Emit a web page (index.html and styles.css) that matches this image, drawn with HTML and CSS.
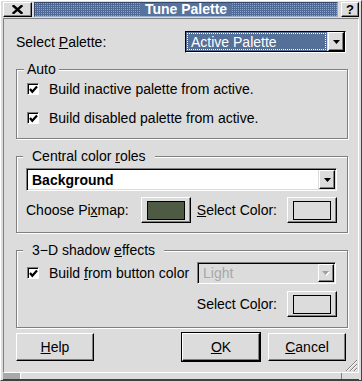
FILE: index.html
```html
<!DOCTYPE html>
<html lang="en">
  <head>
    <meta charset="UTF-8">
    <title>Tune Palette</title>
    <link rel="stylesheet" href="styles.css">
  </head>
  <body>
    <div class="window">
      <div class="titlebar">
        <span class="tb-btn tb-close">
          <svg width="11" height="9" viewBox="0 0 11 9"><path d="M1.5 1 L9.5 8 M9.5 1 L1.5 8" stroke="#000" stroke-width="2.4" stroke-linecap="square"/></svg>
        </span>
        <div class="tb-bar">
          <span class="tb-dots"></span>
          <span class="tb-title">Tune Palette</span>
          <span class="tb-dots"></span>
        </div>
        <span class="tb-btn tb-help">?</span>
      </div>

      <div class="client">
        <div class="palette-row">
          <span>Select <u>P</u>alette:</span>
          <div class="combo combo-active">
            <span class="combo-field"><span class="focus-rect">Active Palette</span></span>
            <span class="combo-arrow"><svg width="7" height="4" viewBox="0 0 7 4"><path d="M0 0 H7 L3.5 4 Z" fill="#000"/></svg></span>
          </div>
        </div>

        <fieldset class="group group-auto">
          <legend class="legend-narrow">Auto</legend>
          <div class="group-body">
            <label class="check-row">
              <span class="check"><svg width="9" height="9" viewBox="0 0 9 9"><path d="M1 4 L3.3 6.8 L8 1.5" fill="none" stroke="#000" stroke-width="2.2"/></svg></span>
              <span>Build inactive palette from active.</span>
            </label>
            <label class="check-row">
              <span class="check"><svg width="9" height="9" viewBox="0 0 9 9"><path d="M1 4 L3.3 6.8 L8 1.5" fill="none" stroke="#000" stroke-width="2.2"/></svg></span>
              <span>Build disabled palette from active.</span>
            </label>
          </div>
        </fieldset>

        <fieldset class="group group-central">
          <legend class="legend-wide">Central color <u>r</u>oles</legend>
          <div class="group-body">
            <div class="combo combo-white">
              <span class="combo-field"><b>Background</b></span>
              <span class="combo-arrow"><svg width="7" height="4" viewBox="0 0 7 4"><path d="M0 0 H7 L3.5 4 Z" fill="#000"/></svg></span>
            </div>
            <div class="color-row">
              <span class="grow">Choose Pi<u>x</u>map:</span>
              <span class="btn color-btn"><span class="swatch swatch-pixmap"></span></span>
              <span class="color-label"><u>S</u>elect Color:</span>
              <span class="btn color-btn"><span class="swatch"></span></span>
            </div>
          </div>
        </fieldset>

        <fieldset class="group group-shadow">
          <legend class="legend-wide">3&minus;D shadow <u>e</u>ffects</legend>
          <div class="group-body">
            <div class="shadow-row">
              <label class="check-row">
                <span class="check"><svg width="9" height="9" viewBox="0 0 9 9"><path d="M1 4 L3.3 6.8 L8 1.5" fill="none" stroke="#000" stroke-width="2.2"/></svg></span>
                <span>Build <u>f</u>rom button color</span>
              </label>
              <div class="combo combo-disabled">
                <span class="combo-field">Light</span>
                <span class="combo-arrow"><svg width="8" height="5" viewBox="0 0 8 5"><path d="M1 1 H8 L4.5 5 Z" fill="#fff"/><path d="M0 0 H7 L3.5 4 Z" fill="#a0a0a0"/></svg></span>
              </div>
            </div>
            <div class="color-row color-row-end">
              <span class="color-label">Select Co<u>l</u>or:</span>
              <span class="btn color-btn"><span class="swatch"></span></span>
            </div>
          </div>
        </fieldset>

        <div class="button-row">
          <span class="btn push"><span><u>H</u>elp</span></span>
          <span class="btn push push-default"><span><u>O</u>K</span></span>
          <span class="btn push"><span><u>C</u>ancel</span></span>
        </div>

        <svg class="grip" width="12" height="12" viewBox="0 0 12 12">
          <path d="M12 1 L1 12 M12 5 L5 12 M12 9 L9 12" stroke="#808080" stroke-width="1"/>
          <path d="M12 2 L2 12 M12 6 L6 12 M12 10 L10 12" stroke="#fff" stroke-width="1"/>
        </svg>
      </div>

      <div class="handle">
        <span class="handle-end"></span>
        <span class="handle-mid"></span>
        <span class="handle-end handle-right"></span>
      </div>
    </div>
  </body>
</html>
```

FILE: styles.css
```css
body {
  margin: 0;
  font-family: 'Liberation Sans', Arial, sans-serif;
  font-size: 14px;
  color: #000;
  background: #dcdcdc;
}

.window {
  width: 362px;
  height: 381px;
  box-sizing: border-box;
  background: #dcdcdc;
  border: 1px solid;
  border-color: #fff #404040 #404040 #fff;
  padding: 0 2px;
  display: flex;
  flex-direction: column;
}

/* title bar */

.titlebar {
  height: 15px;
  margin: 1px 0;
  display: flex;
  gap: 2px;
}

.tb-btn {
  box-sizing: border-box;
  height: 15px;
  border: 1px solid;
  border-color: #fff #000 #000 #fff;
  box-shadow: inset -1px -1px 0 #808080;
  display: flex;
  align-items: center;
  justify-content: center;
}

.tb-close {
  width: 29px;
}

.tb-help {
  width: 18px;
  margin-left: 1px;
  font-weight: bold;
  font-size: 13px;
  line-height: 13px;
}

.tb-bar {
  flex: 1;
  display: flex;
  box-sizing: border-box;
  border: 1px solid;
  border-color: #34496a #9aaccb #9aaccb #34496a;
  background: #56729e;
}

.tb-dots {
  flex: 1;
  background-color: #4f6a97;
  background-image:
    linear-gradient(90deg, transparent 1px, #4f6a97 1px),
    linear-gradient(transparent 1px, #4f6a97 1px),
    linear-gradient(#8aa3cb, #8aa3cb);
  background-size: 2px 2px;
}

.tb-title {
  padding: 0 5px;
  color: #fff;
  font-weight: bold;
  font-size: 14px;
  line-height: 13px;
}

/* client area */

.client {
  flex: 1;
  position: relative;
  border: 1px solid;
  border-color: #808080 #fff #fff #808080;
  padding: 12px 10px 0 12px;
}

.palette-row {
  height: 22px;
  display: flex;
  align-items: center;
  justify-content: space-between;
}

.combo {
  box-sizing: border-box;
  display: flex;
  border: 1px solid;
  border-color: #808080 #fff #fff #808080;
  box-shadow: inset 1px 1px 0 #000;
  padding: 1px;
}

.combo-field {
  flex: 1;
  display: flex;
  align-items: center;
  padding-left: 4px;
}

.combo-arrow {
  box-sizing: border-box;
  width: 16px;
  border: 1px solid;
  border-color: #fff #000 #000 #fff;
  box-shadow: inset -1px -1px 0 #808080;
  background: #dcdcdc;
  display: flex;
  align-items: center;
  justify-content: center;
}

.combo-active {
  width: 161px;
  height: 22px;
  margin-right: 2px;
  border-color: #000 #fff #fff #000;
  box-shadow: inset -1px -1px 0 #000;
  padding: 0 1px 1px 0;
}

.combo-active .combo-field {
  background: #546f98;
  color: #fff;
  padding: 1px;
  margin-right: 1px;
}

.focus-rect {
  flex: 1;
  align-self: stretch;
  display: flex;
  align-items: center;
  padding-left: 3px;
  border: 1px dotted #fff;
}

.combo-white {
  height: 23px;
}

.combo-white .combo-field {
  background: #fff;
  margin-right: 1px;
}

.combo-disabled {
  width: 139px;
  height: 22px;
  margin-left: auto;
  margin-right: 1px;
}

.combo-disabled .combo-field {
  color: #a8a8a8;
}

/* group boxes */

.group {
  margin: 0;
  padding: 0;
  min-width: 0;
  border: 1px solid #808080;
  box-shadow: inset 1px 1px 0 #fff, 1px 1px 0 #fff;
}

.group legend {
  background: #dcdcdc;
  line-height: 16px;
  padding: 0 3px;
}

.legend-narrow {
  margin-left: 7px;
}

.legend-wide {
  margin-left: 6px;
  padding: 0 9px !important;
}

.group-body {
  padding: 0 10px 0 9px;
}

.group-auto {
  margin-top: 8px;
}

.group-auto .group-body {
  padding-top: 2px;
  padding-bottom: 10px;
}

.group-central {
  margin-top: 9px;
}

.group-central .group-body {
  padding-top: 4px;
  padding-bottom: 9px;
}

.group-shadow {
  margin-top: 9px;
}

.group-shadow .group-body {
  padding-top: 4px;
  padding-bottom: 10px;
}

.check-row {
  height: 20px;
  display: flex;
  align-items: center;
  gap: 10px;
  margin-left: 1px;
}

.check-row + .check-row {
  margin-top: 9px;
}

.check {
  box-sizing: border-box;
  width: 12px;
  height: 12px;
  background: #fff;
  border: 1px solid;
  border-color: #808080 #fff #fff #808080;
  box-shadow: inset 1px 1px 0 #000;
  display: flex;
  align-items: center;
  justify-content: center;
  padding: 1px 0 0 1px;
}

.shadow-row {
  height: 22px;
  display: flex;
  align-items: center;
}

.color-row {
  height: 26px;
  display: flex;
  align-items: center;
  margin-top: 6px;
}

.color-row-end {
  justify-content: flex-end;
  margin-top: 7px;
}

.grow {
  flex: 1;
}

.color-label {
  margin: 0 10px 0 6px;
}

/* buttons */

.btn {
  box-sizing: border-box;
  border: 1px solid;
  border-color: #fff #000 #000 #fff;
  box-shadow: inset -1px -1px 0 #808080;
  display: flex;
  align-items: center;
  justify-content: center;
}

.color-btn {
  width: 50px;
  height: 26px;
}

.swatch {
  width: 36px;
  height: 17px;
  border: 1px solid #000;
  background: #dcdcdc;
}

.swatch-pixmap {
  background: #4f5a44;
}

.button-row {
  display: flex;
  margin: 5px 2px 0 0;
}

.push {
  width: 78px;
  height: 28px;
}

.push-default {
  margin-left: auto;
  margin-right: 8px;
  outline: 1px solid #000;
}

.grip {
  position: absolute;
  right: 1px;
  bottom: 1px;
}

/* bottom frame strip */

.handle {
  height: 6px;
  display: flex;
  border-bottom: 1px solid #404040;
}

.handle-end {
  width: 17px;
  background: #a8a8a8;
  border-right: 1px solid #fff;
}

.handle-mid {
  flex: 1;
  background: #dcdcdc;
}

.handle-right {
  background: #dcdcdc;
  border-right: 0;
  border-left: 1px solid #808080;
}
```
